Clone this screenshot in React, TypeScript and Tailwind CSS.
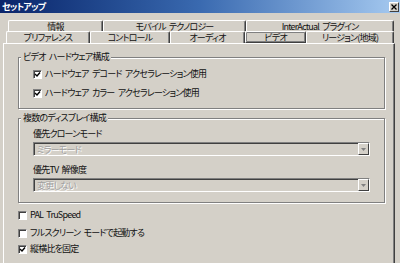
import React from 'react';

const font = "font-['MS_UI_Gothic','Noto_Sans_CJK_JP',sans-serif] [font-feature-settings:'palt'] tracking-[-0.8px] [word-spacing:2px]";

const Check = ({ checked }: { checked?: boolean }) => (
  <span className="w-[9px] h-[9px] shrink-0 bg-white border border-t-[#808080] border-l-[#808080] border-b-white border-r-white shadow-[inset_1px_1px_0_#404040] flex items-center justify-center">
    {checked && (
      <svg width="7" height="7" viewBox="0 0 7 7">
        <path d="M1 3 L3 5 L6 1.5" stroke="#000" strokeWidth="1.4" fill="none" />
      </svg>
    )}
  </span>
);

const CheckRow = ({ label, checked, className = '' }: { label: string; checked?: boolean; className?: string }) => (
  <div className={`flex items-center gap-[3px] h-[12px] ${className}`}>
    <Check checked={checked} />
    <span className="text-[9px] leading-[12px] text-[#111] whitespace-nowrap">{label}</span>
  </div>
);

const Tab = ({ label, w, active }: { label: string; w: number; active?: boolean }) => (
  <div
    style={{ width: w }}
    className={`h-full flex items-center justify-center text-[9px] leading-[9px] text-[#111] whitespace-nowrap rounded-t-[2px] border-t border-l border-white border-r border-r-[#404040] shadow-[inset_-1px_0_0_#808080] ${
      active ? 'border-b border-b-[#404040] outline outline-1 outline-[#808080] -outline-offset-2' : ''
    }`}
  >
    {label}
  </div>
);

const Select = ({ value }: { value: string }) => (
  <div className="ml-[14px] w-[337px] h-[14px] flex items-center bg-[#d4d0c8] border border-t-[#808080] border-l-[#808080] border-b-white border-r-white shadow-[inset_1px_1px_0_#404040]">
    <span className="flex-1 pl-[3px] text-[9px] leading-none text-[#a0a0a0] [text-shadow:1px_1px_0_#ffffff]">{value}</span>
    <span className="w-[11px] h-[12px] flex items-center justify-center border border-t-white border-l-white border-r-[#404040] border-b-[#404040]">
      <svg width="5" height="3" viewBox="0 0 5 3">
        <path d="M0 0 H5 L2.5 3 Z" fill="#808080" />
      </svg>
    </span>
  </div>
);

const Group = ({ title, className = '', children }: { title: string; className?: string; children: React.ReactNode }) => (
  <div className={`relative ml-[14px] w-[367px] border border-[#808080] shadow-[inset_1px_1px_0_#ffffff,1px_1px_0_#ffffff] ${className}`}>
    <span className="absolute left-[2px] top-[-7px] px-[2px] bg-[#d4d0c8] text-[9px] leading-[12px] text-[#111] whitespace-nowrap">{title}</span>
    {children}
  </div>
);

export default function App() {
  return (
    <div className={`w-[400px] h-[263px] overflow-hidden bg-[#d4d0c8] ${font}`}>
      {/* title bar */}
      <div className="h-[13px] flex items-center justify-between bg-gradient-to-r from-[#0a246a] via-[#3a6ab0] to-[#a6caf0] pl-[2px] pr-[1px]">
        <span className="text-[9px] leading-none font-bold text-white">セットアップ</span>
        <span className="w-[10px] h-[10px] bg-[#d4d0c8] border border-t-white border-l-white border-r-[#404040] border-b-[#404040] flex items-center justify-center">
          <svg width="6" height="6" viewBox="0 0 6 6">
            <path d="M0.5 0.5 L5.5 5.5 M5.5 0.5 L0.5 5.5" stroke="#000" strokeWidth="1.3" />
          </svg>
        </span>
      </div>

      {/* tabs */}
      <div className="mt-[7px] h-[11px] flex pl-[8px]">
        <Tab label="情報" w={95} />
        <Tab label="モバイル テクノロジー" w={143} />
        <Tab label="InterActual プラグイン" w={148} />
      </div>
      <div className="h-[12px] flex pl-[6px]">
        <Tab label="プリファレンス" w={84} />
        <Tab label="コントロール" w={80} />
        <Tab label="オーディオ" w={75} />
        <Tab label="ビデオ" w={61} active />
        <Tab label="リージョン(地域)" w={88} />
      </div>

      {/* panel */}
      <div className="ml-[3px] w-[392px] h-[220px] border-t border-l border-white border-r border-r-[#404040] shadow-[inset_-1px_0_0_#808080]">
        <Group title="ビデオ ハードウェア構成" className="mt-[13px] h-[52px]">
          <CheckRow className="ml-[14px] mt-[10px]" label="ハードウェア デコード アクセラレーション使用" checked />
          <CheckRow className="ml-[14px] mt-[7px]" label="ハードウェア カラー アクセラレーション使用" checked />
        </Group>

        <Group title="複数のディスプレイ構成" className="mt-[9px] h-[85px]">
          <div className="ml-[14px] mt-[9px] h-[12px] text-[9px] leading-[12px] text-[#111]">優先クローンモード</div>
          <div className="mt-[2px]">
            <Select value="ミラーモード" />
          </div>
          <div className="ml-[14px] mt-[8px] h-[12px] text-[9px] leading-[12px] text-[#111]">優先TV 解像度</div>
          <div className="mt-[2px]">
            <Select value="変更しない" />
          </div>
        </Group>

        <CheckRow className="ml-[14px] mt-[6px]" label="PAL TruSpeed" />
        <CheckRow className="ml-[14px] mt-[6px]" label="フルスクリーン モードで起動する" />
        <CheckRow className="ml-[14px] mt-[4px]" label="縦横比を固定" checked />
      </div>
    </div>
  );
}
